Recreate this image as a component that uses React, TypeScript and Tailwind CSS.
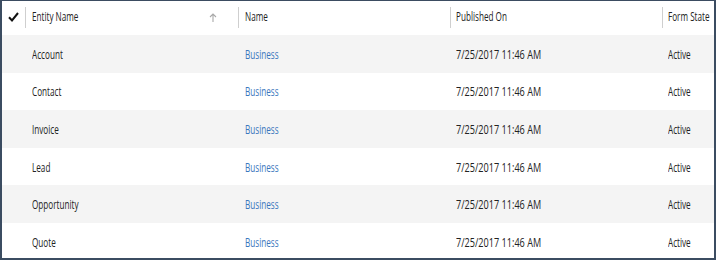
import React from "react";

const rows = ["Account", "Contact", "Invoice", "Lead", "Opportunity", "Quote"];

// narrow, segoe-like text: squeeze horizontally
function T({ children, className = "scale-x-[0.68]" }: { children: React.ReactNode; className?: string }) {
  return (
    <span className={`inline-block origin-left whitespace-nowrap text-[12px] ${className}`}>
      {children}
    </span>
  );
}

export default function App() {
  return (
    <div
      className="w-[716px] h-[260px] overflow-hidden bg-white border-t border-l-2 border-r-2 border-b-2 border-[#3b4c61] text-[#222]"
      style={{ fontFamily: '"Open Sans", "Noto Sans", sans-serif' }}
    >
      {/* Header */}
      <div className="flex h-[34px] items-center pb-[2px]">
        <div className="w-[23px] shrink-0 flex justify-center">
          <svg width="11" height="10" viewBox="0 0 11 10">
            <path d="M1 5.2 L4 8.4 L10 1" fill="none" stroke="#111" strokeWidth="2" />
          </svg>
        </div>
        <div className="w-[213px] shrink-0 flex items-center border-l border-[#cfcfcf] h-[21px] pl-[6px] pr-[20px] justify-between">
          <T>Entity Name</T>
          <svg width="8" height="9" viewBox="0 0 8 9" className="mr-[1px]">
            <path d="M4 9 V1.2 M1 4 L4 1 L7 4" fill="none" stroke="#a9a9a9" strokeWidth="1.1" />
          </svg>
        </div>
        <div className="w-[212px] shrink-0 flex items-center border-l border-[#cfcfcf] h-[21px] pl-[6px]">
          <T>Name</T>
        </div>
        <div className="w-[212px] shrink-0 flex items-center border-l border-[#cfcfcf] h-[21px] pl-[5px]">
          <T>Published On</T>
        </div>
        <div className="flex-1 min-w-0 flex items-center border-l border-[#cfcfcf] h-[21px] pl-[5px]">
          <T>Form State</T>
        </div>
      </div>

      {/* Rows */}
      {rows.map((r, i) => (
        <div
          key={r}
          className={`flex h-[37.6px] items-center pb-[2px] ${i % 2 === 0 ? "bg-[#f4f4f4]" : "bg-white"}`}
        >
          <div className="w-[23px] shrink-0" />
          <div className="w-[213px] shrink-0 pl-[7px]">
            <T>{r}</T>
          </div>
          <div className="w-[212px] shrink-0 pl-[7px]">
            <T className="scale-x-[0.68] text-[#3a76bd]">Business</T>
          </div>
          <div className="w-[212px] shrink-0 pl-[6px]">
            <T className="scale-x-[0.76]">7/25/2017 11:46 AM</T>
          </div>
          <div className="flex-1 min-w-0 pl-[6px]">
            <T>Active</T>
          </div>
        </div>
      ))}
    </div>
  );
}
